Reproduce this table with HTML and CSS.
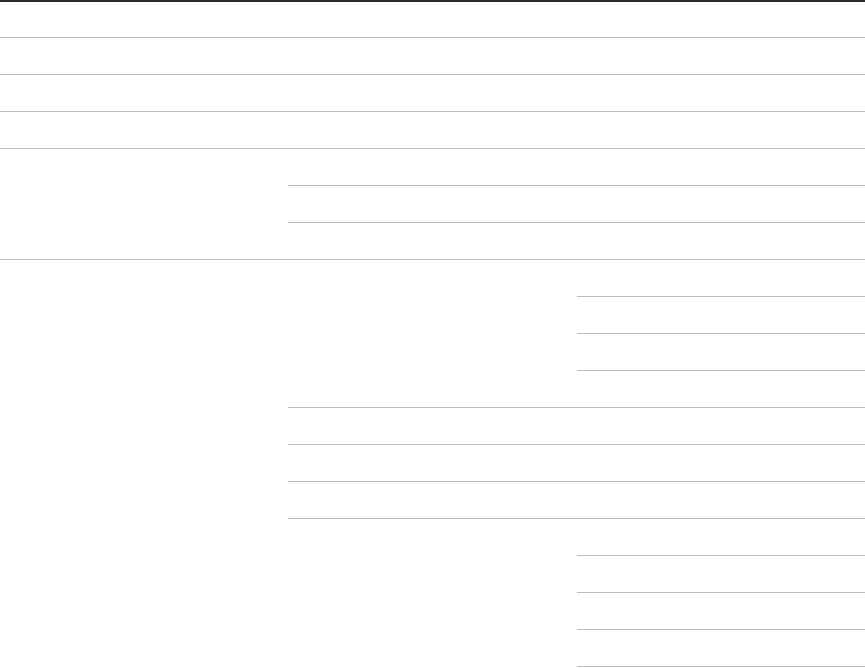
FILE: index.html
```html
<!DOCTYPE html>
<html>
<head>
<meta charset="utf-8">
<link rel="stylesheet" href="styles.css">
</head>
<body>
<table class="grid">
  <tr class="first"><td></td><td></td><td></td></tr>
  <tr><td></td><td></td><td></td></tr>
  <tr><td></td><td></td><td></td></tr>
  <tr><td></td><td></td><td></td></tr>
  <tr><td rowspan="3"></td><td></td><td></td></tr>
  <tr><td></td><td></td></tr>
  <tr><td></td><td></td></tr>
  <tr><td rowspan="12"></td><td rowspan="4"></td><td></td></tr>
  <tr><td></td></tr>
  <tr><td></td></tr>
  <tr><td></td></tr>
  <tr><td></td><td></td></tr>
  <tr><td></td><td></td></tr>
  <tr><td></td><td></td></tr>
  <tr><td rowspan="5"></td><td></td></tr>
  <tr><td></td></tr>
  <tr><td></td></tr>
  <tr><td></td></tr>
  <tr><td></td></tr>
</table>
</body>
</html>
```

FILE: styles.css
```css
html, body {
  margin: 0;
  padding: 0;
  background: #ffffff;
  font-family: "Liberation Sans", Arial, sans-serif;
}

.grid {
  width: 100%;
  table-layout: fixed;
  border-collapse: separate;
  border-spacing: 0;
  border-top: 2px solid #2b2b2b;
}

.grid td {
  height: 37px;
  padding: 0;
  box-sizing: border-box;
  border-bottom: 1px solid #bdbdbd;
}

.grid .first td {
  height: 36px;
}
```
